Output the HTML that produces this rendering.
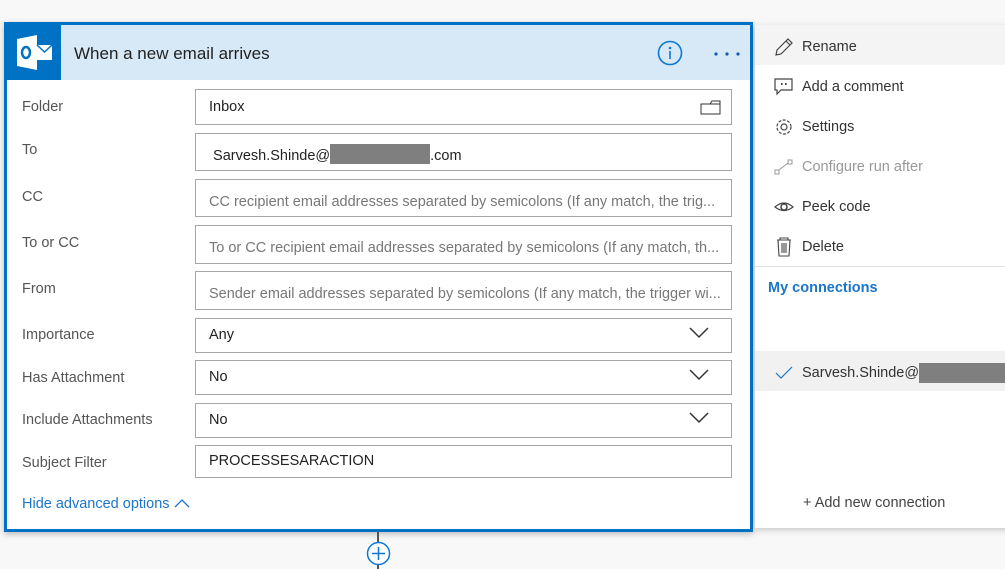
<!DOCTYPE html>
<html><head><style>
*{box-sizing:border-box;margin:0;padding:0}
body{width:1005px;height:569px;background:#f8f8f8;font-family:"Liberation Sans","Segoe UI",sans-serif;position:relative;overflow:hidden;color:#333}
.card{position:absolute;left:4px;top:22px;width:749px;height:510px;border:3px solid #0072c6;background:#fff;box-shadow:0 2px 6px rgba(0,0,0,.25)}
.hdr{position:absolute;left:0;top:0;right:0;height:55px;background:#d7e8f6}
.logo{position:absolute;left:0;top:0;width:54px;height:55px;background:#0072c6}
.title{position:absolute;left:67px;top:19px;font-size:17px;color:#222}
.lbl{position:absolute;left:15px;font-size:14.5px;color:#555}
.inp{position:absolute;left:188px;width:537px;border:1px solid #a6a6a6;background:#fff;font-size:14.5px;padding-left:13px;color:#222;white-space:nowrap;overflow:hidden}
.ph{color:#777}
.chev{position:absolute;right:22px;top:8px}
.menu{position:absolute;left:755px;top:25px;width:260px;height:503px;background:#fff;box-shadow:0 2px 6px rgba(0,0,0,.2)}
.mi{position:absolute;left:0;width:260px;height:40px;font-size:14.5px;color:#333}
.mi span{position:absolute;left:47px;top:14px}
.mi svg{position:absolute;left:19px;top:12px}
</style></head><body>
<div class="card">
 <div class="hdr">
  <div class="logo"><svg width="54" height="55" viewBox="0 0 54 55"><path d="M10 14 L30 10 L30 45 L10 41Z" fill="#fff"/><rect x="30" y="20" width="15" height="15" fill="#fff"/><path d="M30 20 L37.5 27 L45 20" stroke="#0072c6" stroke-width="1.5" fill="none"/><ellipse cx="19" cy="27.5" rx="4" ry="5.5" fill="none" stroke="#0072c6" stroke-width="2.5"/></svg></div>
  <div class="title">When a new email arrives</div>
  <svg style="position:absolute;left:650px;top:15px" width="26" height="26"><circle cx="13" cy="13" r="11.5" fill="none" stroke="#0a78d4" stroke-width="1.6"/><circle cx="13" cy="8" r="1.3" fill="#0a78d4"/><rect x="12.2" y="11" width="1.6" height="8" fill="#0a78d4"/></svg>
  <svg style="position:absolute;left:706px;top:26px" width="30" height="6"><circle cx="3" cy="3" r="1.6" fill="#0a5fb0"/><circle cx="14" cy="3" r="1.6" fill="#0a5fb0"/><circle cx="25" cy="3" r="1.6" fill="#0a5fb0"/></svg>
 </div>
 <div class="lbl" style="top:74px">Folder</div>
 <div class="inp" style="top:64px;height:36px;line-height:34px">Inbox<svg style="position:absolute;right:10px;top:9px" width="21" height="16"><path d="M1 5 H20 V15 H1Z M10 5 L12 2 H20 V5" fill="none" stroke="#333" stroke-width="1"/></svg></div>
 <div class="lbl" style="top:117px">To</div>
 <div class="inp" style="top:108px;height:38px;line-height:44px">&nbsp;Sarvesh.Shinde@<span style="display:inline-block;width:100px;height:20px;background:#7f7f7f;vertical-align:-4px"></span>.com</div>
 <div class="lbl" style="top:164px">CC</div>
 <div class="inp ph" style="top:154px;height:38px;line-height:44px">CC recipient email addresses separated by semicolons (If any match, the trig...</div>
 <div class="lbl" style="top:210px">To or CC</div>
 <div class="inp ph" style="top:200px;height:39px;line-height:44px">To or CC recipient email addresses separated by semicolons (If any match, th...</div>
 <div class="lbl" style="top:256px">From</div>
 <div class="inp ph" style="top:246px;height:39px;line-height:44px">Sender email addresses separated by semicolons (If any match, the trigger wi...</div>
 <div class="lbl" style="top:302px">Importance</div>
 <div class="inp" style="top:293px;height:35px;line-height:33px">Any<svg class="chev" width="20" height="12"><path d="M1 1 L10 10 L19 1" fill="none" stroke="#333" stroke-width="1.5"/></svg></div>
 <div class="lbl" style="top:345px">Has Attachment</div>
 <div class="inp" style="top:335px;height:35px;line-height:33px">No<svg class="chev" width="20" height="12"><path d="M1 1 L10 10 L19 1" fill="none" stroke="#333" stroke-width="1.5"/></svg></div>
 <div class="lbl" style="top:387px">Include Attachments</div>
 <div class="inp" style="top:378px;height:35px;line-height:33px">No<svg class="chev" width="20" height="12"><path d="M1 1 L10 10 L19 1" fill="none" stroke="#333" stroke-width="1.5"/></svg></div>
 <div class="lbl" style="top:430px">Subject Filter</div>
 <div class="inp" style="top:420px;height:33px;line-height:31px">PROCESSESARACTION</div>
 <div class="lbl" style="top:471px;color:#1b75c9">Hide advanced options <svg width="16" height="10"><path d="M1 9 L8 2 L15 9" fill="none" stroke="#1b75c9" stroke-width="1.3"/></svg></div>
</div>
<div style="position:absolute;left:377px;top:532px;width:2px;height:37px;background:#555"></div>
<svg style="position:absolute;left:366px;top:541px" width="25" height="25"><circle cx="12.5" cy="12.5" r="11" fill="#fff" stroke="#0a78d4" stroke-width="1.5"/><path d="M12.5 6 V19 M6 12.5 H19" stroke="#0a78d4" stroke-width="1.5"/></svg>
<div class="menu">
 <div class="mi" style="top:0;background:#f4f4f4"><svg width="20" height="20"><path d="M2 18 L3 13 L14 2 L18 6 L7 17Z M12 4 L16 8" fill="none" stroke="#444" stroke-width="1.2"/></svg><span>Rename</span></div>
 <div class="mi" style="top:40px"><svg width="20" height="20"><path d="M1 2 H18 V13 H7 L3 17 V13 H1Z" fill="none" stroke="#444" stroke-width="1.2"/><rect x="7" y="6" width="1.6" height="2" fill="#444"/><rect x="11" y="6" width="1.6" height="2" fill="#444"/></svg><span>Add a comment</span></div>
 <div class="mi" style="top:80px"><svg width="20" height="20"><circle cx="10" cy="10" r="7" fill="none" stroke="#444" stroke-width="1.2" stroke-dasharray="3 1.5"/><circle cx="10" cy="10" r="3" fill="none" stroke="#444" stroke-width="1.2"/></svg><span>Settings</span></div>
 <div class="mi" style="top:120px;color:#999"><svg width="20" height="20"><rect x="1" y="13" width="4" height="4" fill="none" stroke="#999"/><rect x="14" y="3" width="4" height="4" fill="none" stroke="#999"/><path d="M5 13 L14 6" stroke="#999"/></svg><span>Configure run after</span></div>
 <div class="mi" style="top:160px"><svg width="20" height="20"><path d="M1 10 Q10 2 19 10 Q10 17 1 10Z" fill="none" stroke="#444" stroke-width="1.2"/><circle cx="10" cy="10" r="3" fill="none" stroke="#444" stroke-width="1.5"/></svg><span>Peek code</span></div>
 <div class="mi" style="top:200px"><svg width="20" height="20"><path d="M3 3 H17 M6 3 V1 H14 V3 M4 3 L5 19 H15 L16 3 M8 6 V16 M10 6 V16 M12 6 V16" fill="none" stroke="#444" stroke-width="1.1"/></svg><span>Delete</span></div>
 <div style="position:absolute;left:0;top:241px;width:260px;height:1px;background:#e0e0e0"></div>
 <div style="position:absolute;left:13px;top:255px;font-size:14.5px;font-weight:bold;color:#1b75c9">My connections</div>
 <div class="mi" style="top:326px;background:#f1f1f1"><svg width="20" height="20"><path d="M2 10 L7 15 L18 4" fill="none" stroke="#1b75c9" stroke-width="1.2"/></svg><span style="top:12px">Sarvesh.Shinde@<span style="position:static;display:inline-block;width:88px;height:20px;background:#7f7f7f;vertical-align:-6px"></span></span></div>
 <div style="position:absolute;left:48px;top:470px;font-size:14.5px;color:#444">+ Add new connection</div>
</div>
</body></html>
